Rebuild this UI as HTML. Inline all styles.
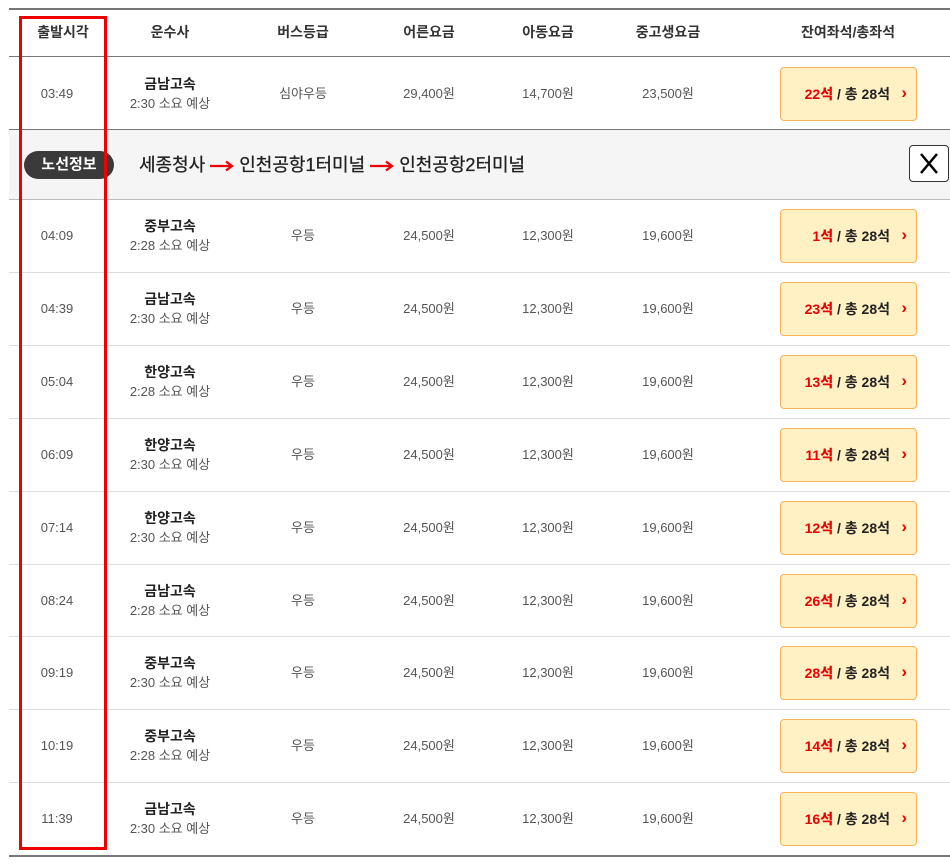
<!DOCTYPE html>
<html><head><meta charset="utf-8"><style>
*{margin:0;padding:0;box-sizing:border-box}
body{width:950px;height:864px;background:#fff;font-family:"Liberation Sans","Noto Sans CJK KR",sans-serif;position:relative;overflow:hidden;color:#555}
.l{position:absolute;left:9px;right:0}
.c{position:absolute;text-align:center;transform:translateX(-50%);white-space:nowrap}
.h{font-size:14px;color:#333;font-weight:bold;top:23px;line-height:18px}
.t{font-size:13px;color:#555;line-height:18px}
.co{font-size:14px;font-weight:bold;color:#222;line-height:20px}
.du{font-size:13px;color:#555;line-height:20px}
.btn{position:absolute;left:780px;width:137px;height:54px;background:#fff1c4;border:1px solid #f7b25a;border-radius:4px;font-size:14px;font-weight:bold;color:#222;text-align:right;padding-right:26px;line-height:52px}
.btn b{color:#e00}
.btn i{position:absolute;right:9px;top:-1px;color:#e00;font-style:normal;font-weight:bold;font-size:17px}
.ar{display:inline-block;vertical-align:middle;margin:0 4px}
</style></head><body>
<div class="l" style="top:8px;height:2px;background:#777"></div>
<div class="l" style="top:56px;height:1px;background:#777"></div>
<div class="c h" style="left:63px">출발시각</div>
<div class="c h" style="left:170px">운수사</div>
<div class="c h" style="left:303px">버스등급</div>
<div class="c h" style="left:429px">어른요금</div>
<div class="c h" style="left:548px">아동요금</div>
<div class="c h" style="left:668px">중고생요금</div>
<div class="c h" style="left:848px">잔여좌석/총좌석</div>
<div class="l" style="top:129px;height:71px;background:#f5f5f5;border-top:1px solid #777;border-bottom:1px solid #bbb"></div>
<div style="position:absolute;left:24px;top:151px;width:90px;height:28px;border-radius:14px;background:#3a3a3a;color:#fff;font-size:15px;font-weight:bold;text-align:center;line-height:28px">노선정보</div>
<div style="position:absolute;left:139px;top:153px;font-size:18px;color:#222;line-height:24px;-webkit-text-stroke:0.3px #222">세종청사<svg class="ar" width="26" height="12" viewBox="0 0 26 12"><path d="M1 6H22M17 1.5L23 6L17 10.5" stroke="#e00" stroke-width="2.2" fill="none"/></svg>인천공항1터미널<svg class="ar" width="26" height="12" viewBox="0 0 26 12"><path d="M1 6H22M17 1.5L23 6L17 10.5" stroke="#e00" stroke-width="2.2" fill="none"/></svg>인천공항2터미널</div>
<div style="position:absolute;left:909px;top:145px;width:40px;height:37px;border:1px solid #333;border-radius:4px;background:#fff"><svg width="38" height="35" viewBox="0 0 38 35"><path d="M11 8L27 27M27 8L11 27" stroke="#000" stroke-width="2.5"/></svg></div>
<div id="rows"></div>
<div style="position:absolute;left:19px;top:16px;width:88px;height:834px;border:3px solid #e00"></div>
<script>
var d=[["03:49","금남고속","2:30","심야우등","29,400원","14,700원","23,500원",22],
["04:09","중부고속","2:28","우등","24,500원","12,300원","19,600원",1],
["04:39","금남고속","2:30","우등","24,500원","12,300원","19,600원",23],
["05:04","한양고속","2:28","우등","24,500원","12,300원","19,600원",13],
["06:09","한양고속","2:30","우등","24,500원","12,300원","19,600원",11],
["07:14","한양고속","2:30","우등","24,500원","12,300원","19,600원",12],
["08:24","금남고속","2:28","우등","24,500원","12,300원","19,600원",26],
["09:19","중부고속","2:30","우등","24,500원","12,300원","19,600원",28],
["10:19","중부고속","2:28","우등","24,500원","12,300원","19,600원",14],
["11:39","금남고속","2:30","우등","24,500원","12,300원","19,600원",16]];
var h="";
d.forEach(function(r,i){
var cy=i==0?94:199+(i-1)*72.9+37;
if(i>1)h+='<div class="l" style="top:'+(199+(i-1)*72.9)+'px;height:1px;background:#ddd"></div>';
h+='<div class="c t" style="left:57px;top:'+(cy-9)+'px">'+r[0]+'</div>';
h+='<div class="c" style="left:170px;top:'+(cy-20)+'px"><div class="co">'+r[1]+'</div><div class="du">'+r[2]+' 소요 예상</div></div>';
h+='<div class="c t" style="left:303px;top:'+(cy-9)+'px">'+r[3]+'</div>';
h+='<div class="c t" style="left:429px;top:'+(cy-9)+'px">'+r[4]+'</div>';
h+='<div class="c t" style="left:548px;top:'+(cy-9)+'px">'+r[5]+'</div>';
h+='<div class="c t" style="left:668px;top:'+(cy-9)+'px">'+r[6]+'</div>';
h+='<div class="btn" style="top:'+(cy-27)+'px"><b>'+r[7]+'석</b> / 총 28석<i>›</i></div>';
});
h+='<div class="l" style="top:855px;height:2px;background:#777"></div>';
document.getElementById("rows").innerHTML=h;
</script>
</body></html>
